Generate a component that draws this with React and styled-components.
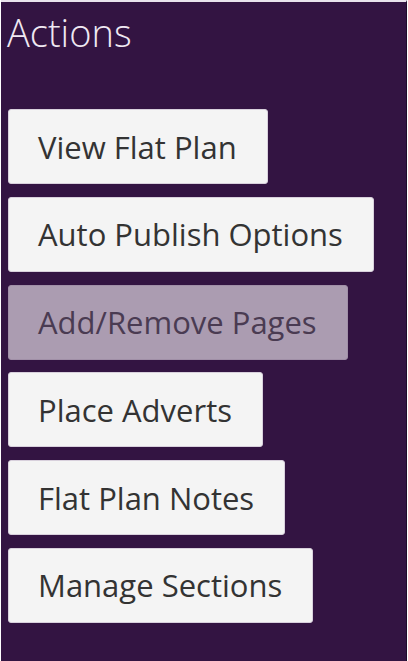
import React from "react";
import styled, { createGlobalStyle } from "styled-components";

const Global = createGlobalStyle`
  html, body { margin: 0; padding: 0; background: #ffffff; }
  body { font-family: "Open Sans", "Noto Sans", sans-serif; }
`;

const Panel = styled.div`
  box-sizing: border-box;
  width: 406px;
  height: 661px;
  margin-left: 1px;
  background: #331442;
  border-top: 2px solid #e9e3ec;
  border-right: 1px solid #1f0b29;
  padding: 0 0 0 7px;
  display: flex;
  flex-direction: column;
`;

const Title = styled.h2`
  margin: 7px 0 0 -1px;
  font-family: "Open Sans", sans-serif;
  font-weight: 300;
  font-size: 38px;
  line-height: 46px;
  color: #efe8f2;
`;

const List = styled.div`
  display: flex;
  flex-direction: column;
  align-items: flex-start;
  gap: 12.8px;
  margin-top: 54px;
`;

const ActionButton = styled.button`
  box-sizing: border-box;
  height: 75px;
  padding: 0 30px 0 29px;
  border: 1px solid ${(p) => (p.$active ? "#a08fa7" : "#d8d0dc")};
  border-radius: 3px;
  background: ${(p) => (p.$active ? "#ab9cb1" : "#f4f4f4")};
  color: ${(p) => (p.$active ? "#4a3b52" : "#333333")};
  font-family: "Open Sans", sans-serif;
  font-size: 31px;
  font-weight: 400;
  text-align: left;
  cursor: pointer;
`;

const actions = [
  "View Flat Plan",
  "Auto Publish Options",
  "Add/Remove Pages",
  "Place Adverts",
  "Flat Plan Notes",
  "Manage Sections",
];

export default function App() {
  return (
    <>
      <Global />
      <Panel>
        <Title>Actions</Title>
        <List>
          {actions.map((a) => (
            <ActionButton key={a} $active={a === "Add/Remove Pages"}>
              {a}
            </ActionButton>
          ))}
        </List>
      </Panel>
    </>
  );
}
